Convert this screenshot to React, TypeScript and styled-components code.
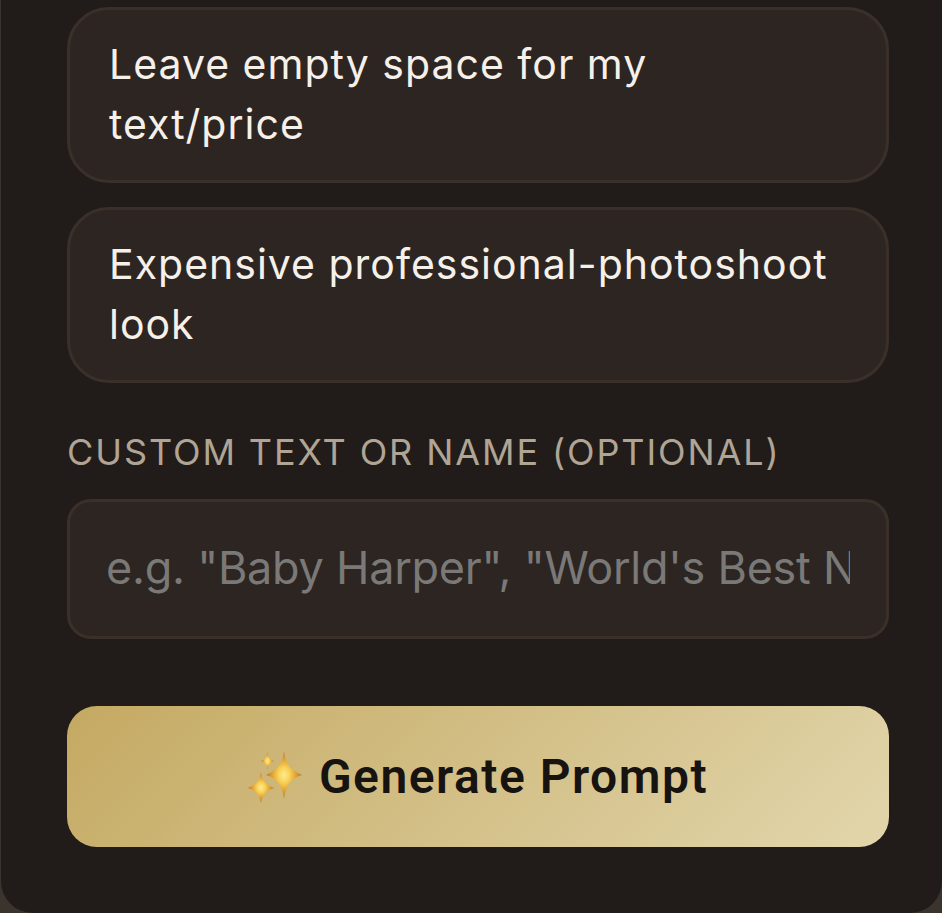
import React from 'react'
import styled, { createGlobalStyle } from 'styled-components'

const GlobalStyle = createGlobalStyle`
  html, body {
    margin: 0;
    padding: 0;
    background: #3a332e;
  }
  * {
    box-sizing: border-box;
  }
`

const Panel = styled.main`
  width: 941px;
  height: 913px;
  margin-left: 1px;
  padding: 7px 53px 0 66px;
  display: flex;
  flex-direction: column;
  background: #211c1a;
  border-radius: 0 0 32px 32px;
  overflow: hidden;
`

const OptionList = styled.div`
  display: flex;
  flex-direction: column;
  gap: 24px;
`

const OptionCard = styled.button`
  width: 100%;
  height: 176px;
  padding: 0 40px 3px 39px;
  text-align: left;
  background: #2c2522;
  border: 3px solid #3a3029;
  border-radius: 42px;
  color: #f5f0e9;
  font-family: Inter, 'Noto Sans', sans-serif;
  font-size: 41px;
  font-weight: 400;
  line-height: 60px;
  letter-spacing: 1px;
`

const FieldLabel = styled.label`
  display: block;
  margin-top: 48px;
  color: #b0a595;
  font-family: Inter, 'Noto Sans', sans-serif;
  font-size: 36px;
  font-weight: 400;
  line-height: 42px;
  letter-spacing: 1.9px;
  text-transform: uppercase;
`

const TextInput = styled.input`
  display: block;
  width: 100%;
  height: 140px;
  margin-top: 26px;
  padding: 0 36px 4px;
  background: #2c2522;
  border: 3px solid #3a3029;
  border-radius: 24px;
  color: #f5f0e9;
  font-family: Inter, 'Noto Sans', sans-serif;
  font-size: 45px;
  letter-spacing: -0.25px;
  outline: none;

  &::placeholder {
    color: #7a7977;
    opacity: 1;
  }
`

const GenerateButton = styled.button`
  width: 100%;
  height: 141px;
  margin-top: 67px;
  display: flex;
  align-items: center;
  justify-content: center;
  gap: 17px;
  border: 0;
  border-radius: 30px;
  background: linear-gradient(135deg, #c4a962, #e2d6ac);
  color: #161310;
  font-family: Roboto, 'Liberation Sans', sans-serif;
  font-size: 48px;
  font-weight: 600;
  letter-spacing: 1.5px;
`

const SparkleIcon = styled.svg`
  width: 54px;
  height: 52px;
  flex: none;
`

const Star = styled.path`
  fill: url(#spark);
`

const Sparkles = () => (
  <SparkleIcon viewBox="0 0 54 52" aria-hidden="true">
    <defs>
      <radialGradient id="spark">
        <stop offset="0" stopColor="#ffe98f" />
        <stop offset="0.3" stopColor="#f9d45c" />
        <stop offset="0.55" stopColor="#eab03a" />
        <stop offset="1" stopColor="#b9772a" />
      </radialGradient>
    </defs>
    <Star d="M36 0 C37.500 12 41 18 54 24 C42 28 38 34 36 48 C34 34 30 28 18 24 C31 18 34.500 12 36 0Z" />
    <Star d="M13 21 C14 29 17 33 26 37 C17 40 15 44 13 52 C11 44 9 40 0 37 C9 33 12 29 13 21Z" />
    <Star d="M19.500 1 C20 6 21.500 8 26 10 C21.500 12 20 14 19.500 19 C19 14 17.500 12 13 10 C17.500 8 19 6 19.500 1Z" />
  </SparkleIcon>
)

export default function App() {
  return (
    <>
      <GlobalStyle />
      <Panel>
        <OptionList>
          <OptionCard>Leave empty space for my text/price</OptionCard>
          <OptionCard>Expensive professional-photoshoot look</OptionCard>
        </OptionList>
        <FieldLabel htmlFor="custom-text">Custom text or name (optional)</FieldLabel>
        <TextInput id="custom-text" placeholder={`e.g. "Baby Harper", "World's Best Nana"`} />
        <GenerateButton>
          <Sparkles />
          Generate Prompt
        </GenerateButton>
      </Panel>
    </>
  )
}
